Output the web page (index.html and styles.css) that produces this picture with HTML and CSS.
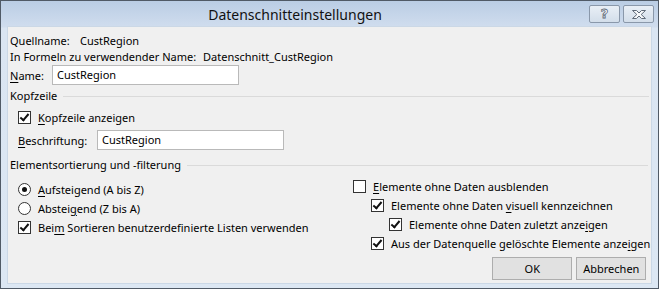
FILE: index.html
```html
<!DOCTYPE html>
<html>
<head>
<meta charset="utf-8">
<link rel="stylesheet" href="styles.css">
</head>
<body>
<div class="window">
  <div class="titlebar">
    <div class="title">Datenschnitteinstellungen</div>
    <div class="caption-buttons">
      <div class="cbtn help">?</div>
      <div class="cbtn close">
        <svg width="14" height="9" viewBox="0 0 14 9"><polygon points="0.5,0.5 4.5,0.5 7,3 9.5,0.5 13.5,0.5 9.2,4.5 13.5,8.5 9.5,8.5 7,6 4.5,8.5 0.5,8.5 4.8,4.5" fill="#f7f9fb" stroke="#5f6a78" stroke-width="1" stroke-linejoin="round"/></svg>
      </div>
    </div>
  </div>
  <div class="client">
    <div class="row info first"><span class="lbl w70">Quellname:</span><span>CustRegion</span></div>
    <div class="row info"><span class="lbl w193">In Formeln zu verwendender Name:</span><span>Datenschnitt_CustRegion</span></div>
    <div class="row field"><span class="lbl w42"><u>N</u>ame:</span><div class="input">CustRegion</div></div>

    <div class="group head-kopf"><span>Kopfzeile</span><div class="rule"></div></div>
    <div class="row opt indent1 kopf-cb"><span class="cb checked"></span><span><u>K</u>opfzeile anzeigen</span></div>
    <div class="row field indent1 besch"><span class="lbl w79"><u>B</u>eschriftung:</span><div class="input">CustRegion</div></div>

    <div class="group head-sort"><span>Elementsortierung und -filterung</span><div class="rule"></div></div>
    <div class="sort">
      <div class="col left">
        <div class="opt"><span class="radio on"></span><span><u>A</u>ufsteigend (A bis Z)</span></div>
        <div class="opt"><span class="radio"></span><span>Abstei<u>g</u>end (Z bis A)</span></div>
        <div class="opt"><span class="cb checked"></span><span>Bei<u>m</u> Sortieren benutzerdefinierte Listen verwenden</span></div>
      </div>
      <div class="col right">
        <div class="opt"><span class="cb"></span><span><u>E</u>lemente ohne Daten ausblenden</span></div>
        <div class="opt lvl1"><span class="cb checked"></span><span>Elemente ohne Daten <u>v</u>isuell kennzeichnen</span></div>
        <div class="opt lvl2"><span class="cb checked"></span><span>Elemente ohne Daten zuletzt anze<u>i</u>gen</span></div>
        <div class="opt lvl1"><span class="cb checked"></span><span>Aus der Datenquelle gelöschte Elemente anze<u>i</u>gen</span></div>
        <div class="buttons">
          <div class="btn ok">OK</div>
          <div class="btn cancel">Abbrechen</div>
        </div>
      </div>
    </div>
  </div>
</div>
</body>
</html>
```
FILE: styles.css
```css
* { box-sizing: border-box; }
html, body { margin: 0; padding: 0; background: #ffffff; }
body {
  font-family: "Noto Sans", "Open Sans", sans-serif;
  font-size: 11px;
  color: #000;
  white-space: nowrap;
}
u { text-decoration: underline; text-underline-offset: 2px; }

.window {
  width: 659px;
  height: 289px;
  border: 1px solid #505a66;
  background: linear-gradient(to bottom, #bacde4 0px, #d0ddee 26px, #dae5f2 27px, #dce7f3 100%);
  padding: 0 6px 4px 6px;
  display: flex;
  flex-direction: column;
}

.titlebar {
  height: 25px;
  display: flex;
  align-items: flex-start;
  margin: 0 -2px 0 0;
}
.title {
  flex: 1;
  text-align: center;
  font-size: 14px;
  line-height: 20px;
  padding-top: 4px;
  padding-right: 4px;
  color: #111;
}
.caption-buttons {
  display: flex;
  gap: 3px;
  padding-top: 4px;
  margin-left: 2px;
}
.cbtn {
  width: 31px;
  height: 18px;
  border: 1px solid #8a98aa;
  border-radius: 2px;
  background: linear-gradient(to bottom, #e9eff6, #d3deea);
  display: flex;
  align-items: center;
  justify-content: center;
}
.cbtn.help {
  font-family: "DejaVu Sans", sans-serif;
  font-weight: bold;
  font-size: 13px;
  line-height: 16px;
  color: #f7f9fb;
  -webkit-text-stroke: 0.8px #5f6a78;
}

.client {
  flex: 1;
  background: #f0f0f0;
  border: 1px solid #cbd8e6;
  padding: 0 2px 0 2px;
  display: flex;
  flex-direction: column;
}

.row { display: flex; align-items: center; }
.info { height: 16px; line-height: 16px; }
.info.first { margin-top: 6px; }
.lbl { flex: none; }
.w70 { width: 70px; }
.w193 { width: 193px; }
.w42 { width: 42px; }
.w79 { width: 79px; }

.field { height: 20px; }
.input {
  width: 187px;
  height: 20px;
  border: 1px solid #b9b9b9;
  background: #fff;
  padding-left: 4px;
  line-height: 18px;
}

.group {
  display: flex;
  align-items: center;
  height: 16px;
  line-height: 16px;
}
.group .rule {
  flex: 1;
  height: 0;
  border-top: 1px solid #dadada;
  margin-left: 6px;
  margin-right: 0;
}
.head-kopf { margin-top: 3px; }
.head-kopf .rule { margin-left: 6px; }
.kopf-cb { margin-top: 4px; height: 16px; }
.besch { margin-top: 3px; }
.head-sort { margin-top: 7px; }
.head-sort .rule { margin-left: 6px; margin-right: 1px; }

.indent1 { padding-left: 8px; }

.opt { display: flex; align-items: center; height: 19px; line-height: 16px; }
.cb, .radio {
  flex: none;
  width: 13px;
  height: 13px;
  margin-right: 7px;
  background: #fff;
  border: 1px solid #333;
  position: relative;
}
.cb.checked::after {
  content: "";
  position: absolute;
  left: 3px;
  top: 0px;
  width: 3px;
  height: 7px;
  border-right: 2px solid #111;
  border-bottom: 2px solid #111;
  transform: rotate(40deg);
}
.radio { border-radius: 50%; }
.radio.on::after {
  content: "";
  position: absolute;
  left: 3px;
  top: 3px;
  width: 5px;
  height: 5px;
  border-radius: 50%;
  background: #111;
}

.sort {
  display: grid;
  grid-template-columns: 335px 1fr;
  flex: 1;
}
.col.left { padding-left: 8px; padding-top: 7px; }
.col.right { padding-left: 8px; padding-top: 4px; display: flex; flex-direction: column; }
.col.right .opt { height: 19px; }
.lvl1 { padding-left: 18px; }
.lvl2 { padding-left: 36px; }

.buttons {
  display: flex;
  justify-content: flex-end;
  gap: 4px;
  margin-top: 4px;
  padding-right: 4px;
}
.btn {
  height: 23px;
  border: 1px solid #adadad;
  background: #e1e1e1;
  text-align: center;
  line-height: 21px;
}
.btn.ok { width: 80px; }
.btn.cancel { width: 70px; }
```
